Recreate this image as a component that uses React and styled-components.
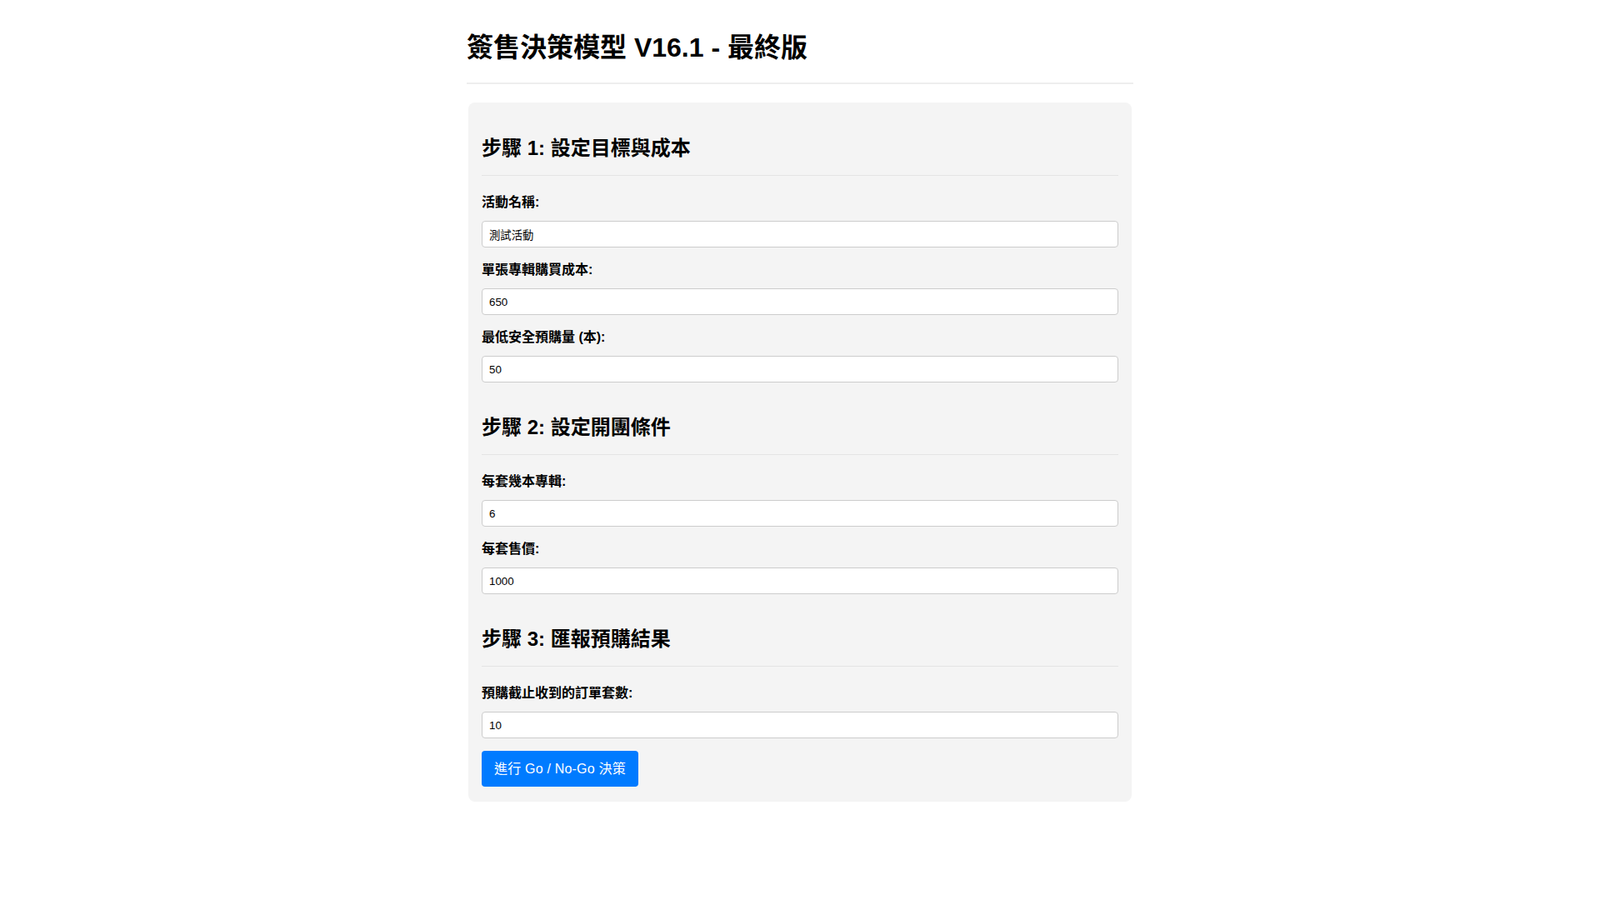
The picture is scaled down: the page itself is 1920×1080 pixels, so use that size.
import React, { useState } from "react";
import styled, { createGlobalStyle } from "styled-components";

const GlobalStyle = createGlobalStyle`
    html, body {
        margin: 0;
        padding: 0;
        background: #ffffff;
    }
    body {
        font-family: "Liberation Sans", Arial, "Noto Sans CJK TC", sans-serif;
        color: #000;
    }
`;

const fields = [
    {
        title: "步驟 1: 設定目標與成本",
        items: [
            { id: "name", label: "活動名稱:", value: "測試活動" },
            { id: "cost", label: "單張專輯購買成本:", value: "650" },
            { id: "min", label: "最低安全預購量 (本):", value: "50" },
        ],
    },
    {
        title: "步驟 2: 設定開團條件",
        items: [
            { id: "perSet", label: "每套幾本專輯:", value: "6" },
            { id: "price", label: "每套售價:", value: "1000" },
        ],
    },
    {
        title: "步驟 3: 匯報預購結果",
        items: [{ id: "orders", label: "預購截止收到的訂單套數:", value: "10" }],
    },
];

const App = () => {
    const [values, setValues] = useState(() => {
        const init = {};
        fields.forEach((s) => s.items.forEach((f) => (init[f.id] = f.value)));
        return init;
    });

    const update = (id) => (e) => setValues({ ...values, [id]: e.target.value });

    return (
        <>
            <GlobalStyle />
            <Container>
                <Title>簽售決策模型 V16.1 - 最終版</Title>
                <Card>
                    {fields.map((section) => (
                        <Section key={section.title}>
                            <StepTitle>{section.title}</StepTitle>
                            {section.items.map((f) => (
                                <Group key={f.id}>
                                    <Label htmlFor={f.id}>{f.label}</Label>
                                    <Input
                                        id={f.id}
                                        value={values[f.id]}
                                        onChange={update(f.id)}
                                    />
                                </Group>
                            ))}
                        </Section>
                    ))}
                    <SubmitButton>進行 Go / No-Go 決策</SubmitButton>
                </Card>
            </Container>
        </>
    );
};

export default App;

const Container = styled.div`
    max-width: 800px;
    margin: 0 auto;
    padding-bottom: 40px;
`;

const Title = styled.h1`
    margin: 37px 0 0;
    font-size: 32px;
    font-weight: 700;
    line-height: 40px;
    padding-bottom: 22px;
    border-bottom: 2px solid #eeeeee;
`;

const Card = styled.div`
    margin: 22px 2px 0;
    padding: 16px 16px 18px;
    background-color: #f4f4f4;
    border-radius: 8px;
`;

const Section = styled.div`
    display: flex;
    flex-direction: column;
`;

const StepTitle = styled.h2`
    margin: 22px 0 20px;
    font-size: 24px;
    font-weight: 700;
    line-height: 34px;
    padding-bottom: 15px;
    border-bottom: 1px solid #e4e4e4;
`;

const Group = styled.div`
    margin-bottom: 15px;
`;

const Label = styled.label`
    display: block;
    font-size: 16px;
    font-weight: 700;
    line-height: 24px;
    margin-bottom: 10px;
`;

const Input = styled.input`
    display: block;
    width: 100%;
    box-sizing: border-box;
    height: 32px;
    padding: 0 8px;
    font-family: "Liberation Sans", Arial, "Noto Sans CJK TC", sans-serif;
    font-size: 13.33px;
    color: #000;
    background: #fff;
    border: 1px solid #cccccc;
    border-radius: 4px;
    outline: none;
`;

const SubmitButton = styled.button`
    display: block;
    padding: 10px 15px;
    font-family: "Liberation Sans", Arial, "Noto Sans CJK TC", sans-serif;
    font-size: 16px;
    line-height: 23px;
    letter-spacing: 0.2px;
    color: #fff;
    background-color: #007bff;
    border: none;
    border-radius: 4px;
    cursor: pointer;
`;
